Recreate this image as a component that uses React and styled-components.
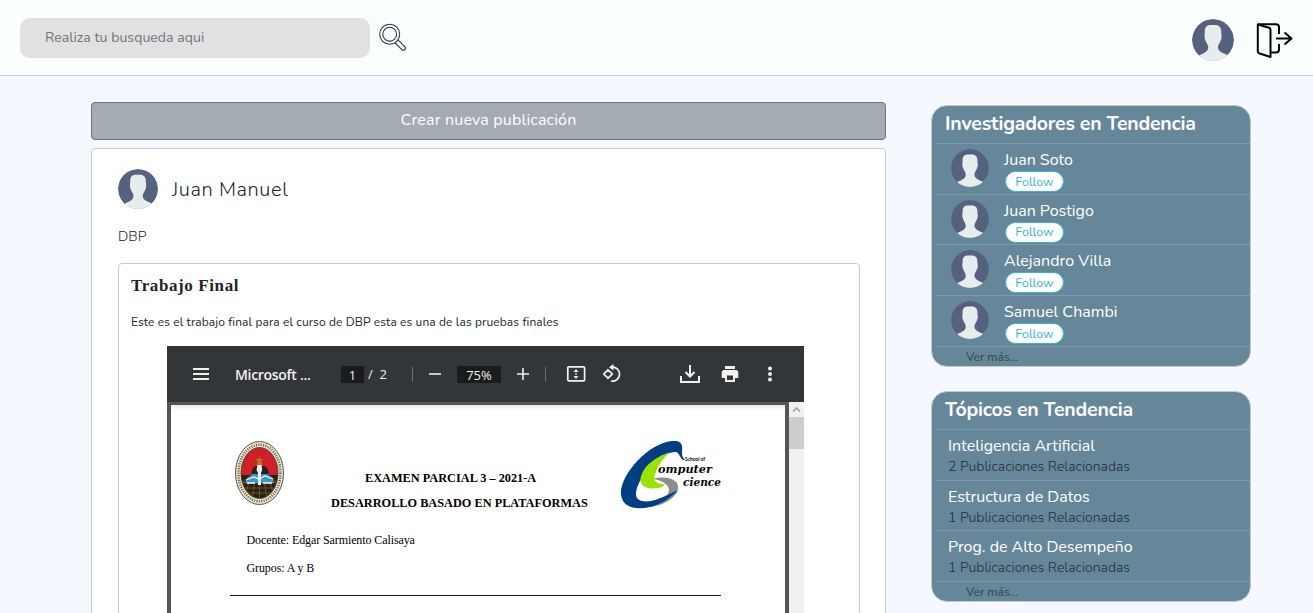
import React from 'react';
import styled, { createGlobalStyle } from 'styled-components';

const GlobalStyle = createGlobalStyle`
  * { box-sizing: border-box; }
  html, body { margin: 0; height: 613px; overflow: hidden; }
  body { background: #f5f9ff; font-family: Nunito, Lato, "Open Sans", sans-serif; color: #212529; }
  button, input { font-family: inherit; }
`;

const Header = styled.header`
  height: 76px;
  padding: 18px 20px 17px;
  display: flex;
  align-items: flex-start;
  background: #fbfeff;
  border-bottom: 1px solid #c9cdd0;
`;

const SearchInput = styled.input`
  width: 350px;
  height: 40px;
  padding: 0 25px 2px;
  border: 0;
  border-radius: 10px;
  background: #e1e1e1;
  font-size: 14px;
  letter-spacing: 0.08px;
  &::placeholder { color: #6c757d; opacity: 1; }
`;

const SearchIcon = styled.svg`
  width: 28px;
  height: 28px;
  margin: 5px 0 0 9px;
`;

const HeaderActions = styled.div`
  margin-left: auto;
  display: flex;
  gap: 22px;
`;

const ExitIcon = styled.svg`
  width: 37px;
  height: 36px;
  margin-top: 5px;
`;

const AvatarSvg = styled.svg`
  flex: none;
  width: ${(p) => p.$size}px;
  height: ${(p) => p.$size}px;
  margin-top: ${(p) => p.$top || 0}px;
  border-radius: 50%;
`;

const Layout = styled.div`
  display: flex;
  align-items: flex-start;
  padding-left: 91px;
`;

const Feed = styled.main`
  width: 795px;
  padding-top: 26px;
`;

const CreateButton = styled.button`
  display: block;
  width: 100%;
  height: 38px;
  padding: 0 0 2px;
  border: 1px solid #6c757d;
  border-radius: 4px;
  background: #a4abb3;
  color: #fff;
  font-size: 16px;
  letter-spacing: 0.2px;
`;

const Post = styled.article`
  height: 700px;
  margin-top: 8px;
  padding: 20px 25px 0 26px;
  border: 1px solid #c8cacc;
  border-radius: 4px;
  background: #fff;
`;

const Author = styled.div`
  display: flex;
  align-items: center;
  gap: 14px;
  height: 40px;
  font-size: 20px;
  font-weight: 300;
  letter-spacing: 0.6px;
`;

const Course = styled.div`
  margin-top: 18px;
  height: 20px;
  line-height: 20px;
  font-size: 14px;
  font-weight: 300;
`;

const Attachment = styled.section`
  height: 600px;
  margin-top: 16px;
  padding: 10px 0 0 12px;
  border: 1px solid #c8cacc;
  border-radius: 4px;
`;

const AttachmentTitle = styled.h2`
  margin: 0;
  height: 24px;
  line-height: 24px;
  font: bold 17px/24px "Liberation Serif", serif;
  letter-spacing: 0.6px;
`;

const Description = styled.p`
  margin: 14px 0;
  height: 20px;
  line-height: 20px;
  font-size: 12px;
  letter-spacing: 0.1px;
`;

const Viewer = styled.div`
  width: 637px;
  height: 500px;
  margin-left: 36px;
  background: #525659;
`;

const Toolbar = styled.div`
  height: 56px;
  display: flex;
  align-items: center;
  padding-left: 24px;
  background: #323639;
  color: #f1f1f1;
  font: 13px "Open Sans", sans-serif;
`;

const ToolIcon = styled.svg`
  flex: none;
  width: 20px;
  height: 20px;
  margin-left: ${(p) => p.$left || 0}px;
  fill: none;
  stroke: #f1f1f1;
  stroke-width: 2;
`;

const FileName = styled.div`
  width: 82px;
  margin-left: 24px;
  font-weight: 600;
  font-size: 14px;
  letter-spacing: -0.3px;
  white-space: nowrap;
  padding-top: 1px;
`;

const ToolField = styled.div`
  width: ${(p) => p.$width}px;
  height: 17px;
  margin-left: ${(p) => p.$left}px;
  background: #191b1c;
  line-height: 18px;
  text-align: center;
`;

const PageCount = styled.div`
  width: 24px;
  margin-left: 4px;
  white-space: pre;
  line-height: 18px;
`;

const Separator = styled.div`
  width: 1px;
  height: 15px;
  margin-left: ${(p) => p.$left}px;
  background: #6b6e70;
`;

const ViewerBody = styled.div`
  display: flex;
  height: 444px;
  padding-left: 4px;
`;

const Sheet = styled.div`
  width: 614px;
  margin: 3px 4px 0 0;
  background: linear-gradient(#ececec, #fff 6px);
  color: #000;
  font-family: "Liberation Serif", serif;
`;

const SheetHeader = styled.div`
  display: flex;
  height: 126px;
  padding: 36px 0 0 64px;
`;

const SealSvg = styled.svg`
  width: 49px;
  height: 64px;
`;

const LogoSvg = styled.svg`
  width: 104px;
  height: 68px;
`;

const SheetHeadings = styled.div`
  width: 336px;
  padding: 25px 0 0 47px;
`;

const SheetHeading = styled.div`
  height: 25px;
  line-height: 25px;
  padding-left: ${(p) => p.$indent || 0}px;
  font-weight: bold;
  font-size: 12.3px;
  letter-spacing: ${(p) => p.$spacing || 0}px;
  white-space: nowrap;
`;

const SheetLine = styled.div`
  height: 28px;
  line-height: 18px;
  padding-left: 75.5px;
  font-size: 12px;
  letter-spacing: -0.1px;
`;

const SheetRule = styled.div`
  width: 491px;
  height: 1px;
  margin: 8px 0 9px 59px;
  background: #111;
`;

const Scrollbar = styled.div`
  width: 15px;
  background: #f1f1f1;
`;

const ScrollArrow = styled.svg`
  display: block;
  width: 15px;
  height: 15px;
`;

const ScrollThumb = styled.div`
  height: 32px;
  background: #cdcdcd;
`;

const Sidebar = styled.aside`
  width: 320px;
  margin-left: 45px;
  padding-top: 29px;
`;

const Panel = styled.section`
  height: ${(p) => p.$height}px;
  margin-bottom: 24px;
  padding-left: 4px;
  border: 1px solid #c4cbd0;
  border-radius: 16px;
  background: #668799;
  overflow: hidden;
`;

const PanelTitle = styled.h2`
  margin: 0;
  height: 37px;
  padding-left: 9px;
  line-height: 36px;
  color: #fff;
  font-size: 19.5px;
  font-weight: 700;
  letter-spacing: ${(p) => p.$spacing}px;
`;

const Row = styled.div`
  display: flex;
  height: 50.7px;
  border-top: 1px solid #7f9aa9;
  padding-left: ${(p) => p.$left}px;
`;

const PersonInfo = styled.div`
  margin-left: 15px;
  padding-top: 6px;
`;

const Name = styled.div`
  height: 20px;
  line-height: 20px;
  color: #fff;
  font-size: 16px;
  letter-spacing: ${(p) => p.$spacing || 0}px;
`;

const Follow = styled.button`
  display: block;
  width: 59px;
  height: 21px;
  margin: 1px 0 0 1px;
  padding: 0 0 1px;
  border: 1px solid #31b6d8;
  border-radius: 11px;
  background: #fff;
  color: #31b6d8;
  font-size: 12.5px;
`;

const TopicInfo = styled.div`
  padding-top: 6px;
`;

const Related = styled.div`
  height: 21px;
  line-height: 21px;
  color: #212d35;
  font-size: 14px;
  font-weight: 300;
`;

const More = styled.div`
  height: 21px;
  padding-left: 30px;
  border-top: 1px solid #7f9aa9;
  line-height: 20px;
  color: #36434b;
  font-size: 12px;
`;

function Avatar({ size, top }) {
  return (
    <AvatarSvg $size={size} $top={top} viewBox="0 0 40 40">
      <circle cx="20" cy="20" r="20" fill="#56607f" />
      <path
        fill="#e7eded"
        d="M12.2 12.5C12 8 14 5.8 18 5.8h4c4.200 0 6 2.700 5.800 6.700 0 2 .8 3.400.2 6-.7 3.600-3.300 5.500-3.300 8.500 0 3.800 4.500 5.500 9.300 7.500L35 42H5l2-7.500c4.500-1.900 8.500-3.600 8.500-7.500 0-3-2.600-4.800-3.300-8.500-.6-2.600 0-4 0-6z"
      />
    </AvatarSvg>
  );
}

function Seal() {
  return (
    <SealSvg viewBox="0 0 49 64">
      <defs>
        <clipPath id="sealInside"><ellipse cx="24.500" cy="32" rx="18.500" ry="25.500" /></clipPath>
      </defs>
      <ellipse cx="24.500" cy="32" rx="24" ry="31.500" fill="#ece7cf" stroke="#55534a" />
      <ellipse cx="24.500" cy="32" rx="21" ry="28.300" fill="none" stroke="#69665a" strokeWidth="2.600" strokeDasharray="1.100 1.300" />
      <g clipPath="url(#sealInside)">
        <path fill="#d02027" d="M0 0h49v36H0z" />
        <path fill="#2c210f" d="M0 34h49v30H0z" />
        <path stroke="#8a7440" strokeWidth=".6" fill="none" d="M0 42h49M0 47h49M0 52h49M24.500 38v22M20 38l-3 22M29 38l3 22M15 38l-6 20M34 38l6 20M10 38L3 52M39 38l7 14" />
        <path fill="#2a2020" d="M17 35c-1-7 1-10 6-10h4c6 0 7 4 6 10z" />
        <path fill="#3a98cd" d="M12 37l6-4h14l6 4 1 5H10z" />
        <path stroke="#f3f8fb" strokeWidth="1.300" fill="none" d="M11 39l8-3 5 2 6-3 8 3M12 42h8M28 42h9" />
        <path fill="#f2efe9" d="M22.500 24h4l.7 5-1.200 3v12h-3V32l-1.500-3z" />
        <path fill="#b9712b" d="M24.500 15l1 3h3l-2 2 .8 4h-5.600l.8-4-2-2h3z" />
      </g>
      <ellipse cx="24.500" cy="32" rx="18.500" ry="25.500" fill="none" stroke="#3c352a" strokeWidth=".8" />
    </SealSvg>
  );
}

function SchoolLogo() {
  return (
    <LogoSvg viewBox="0 0 104 68">
      <path fill="#8b8d8f" d="M32 38c8-3 25-2 26 7 1 9-10 18-26 21l-10 0 2-4c10 0 20-3 24-9 4-8-5-14-16-15z" />
      <path fill="#023e84" d="M63 19c-3-2-3.500-7-7-8C43 10 18 34 16 52c-1 10 12 10 22 6 8-3 14-6 20-9-7 8-17 14-28 17-14 3-27 1-29-12C-1 35 28 2 52 0c9-1 11 4 10 10-.5 5 1 7 3 9z" />
      <path fill="#9be205" d="M50 11C39 15 25 22 21 35c-3 9 5 14 15 12 5 0 8-2 9-4-8 0-13-3-10-9 2-8 7-16 15-23z" />
      <g fill="#050505">
        <text x="65" y="20" fontFamily="Lato" fontWeight="700" fontSize="5" textLength="20">School of</text>
        <text x="38" y="32" fontFamily="DejaVu Serif" fontStyle="italic" fontWeight="700" fontSize="11.500" textLength="54" lengthAdjust="spacingAndGlyphs">omputer</text>
        <text x="63" y="45" fontFamily="DejaVu Serif" fontStyle="italic" fontWeight="700" fontSize="11.500" textLength="38" lengthAdjust="spacingAndGlyphs">cience</text>
      </g>
    </LogoSvg>
  );
}

function ViewerToolbar() {
  return (
    <Toolbar>
      <ToolIcon viewBox="0 0 20 20"><path d="M2 5h16M2 10h16M2 15h16" /></ToolIcon>
      <FileName>Microsoft ...</FileName>
      <ToolField $width={23} $left={24}>1</ToolField>
      <PageCount>/  2</PageCount>
      <Separator $left={20} />
      <ToolIcon $left={12} viewBox="0 0 20 20"><path stroke="#c8c9ca" d="M4 10h12" /></ToolIcon>
      <ToolField $width={44} $left={12}>75%</ToolField>
      <ToolIcon $left={12} viewBox="0 0 20 20"><path strokeWidth="1.600" d="M4 10h12M10 4v12" /></ToolIcon>
      <Separator $left={12} />
      <ToolIcon $left={20} viewBox="0 0 20 20">
        <rect x="1.800" y="2.800" width="16.800" height="14" rx="1" strokeWidth="1.700" />
        <path stroke="none" fill="#f1f1f1" d="M10 5l2.500 3h-5zM10 15l2.500-3h-5zM9.300 9.300h1.500v1.500H9.300z" />
      </ToolIcon>
      <ToolIcon $left={16} viewBox="0 0 20 20">
        <path strokeWidth="1.700" d="M6 5.800L10.300 10 6 14.200 1.800 10zM10 3.200a7 7 0 1 1-1 13.800" />
        <path stroke="none" fill="#f1f1f1" d="M7 3.300L11.500 0v6.500z" />
      </ToolIcon>
      <ToolIcon $left={58} viewBox="0 0 20 20">
        <path strokeWidth="2" d="M1 12v6h18v-6M10 1v11" /><path d="M5.500 8l4.500 4.500L14.500 8" />
      </ToolIcon>
      <ToolIcon $left={20} viewBox="0 0 20 20">
        <path stroke="none" fill="#f1f1f1" fillRule="evenodd" d="M5 2h10v3H5zM4.500 6h11A2.500 2.500 0 0 1 18.300 8.500V14H15v4H5v-4H1.700V8.500A2.500 2.500 0 0 1 4.500 6zM7 11.500V16h6v-4.500z" />
      </ToolIcon>
      <ToolIcon $left={20} viewBox="0 0 20 20">
        <g stroke="none" fill="#f1f1f1"><circle cx="10" cy="4.500" r="2" /><circle cx="10" cy="10" r="2" /><circle cx="10" cy="15.500" r="2" /></g>
      </ToolIcon>
    </Toolbar>
  );
}

const people = [
  { name: 'Juan Soto', spacing: 0 },
  { name: 'Juan Postigo', spacing: 0 },
  { name: 'Alejandro Villa', spacing: 0 },
  { name: 'Samuel Chambi', spacing: 0 },
];

const topics = [
  { name: 'Inteligencia Artificial', count: 2 },
  { name: 'Estructura de Datos', count: 1 },
  { name: 'Prog. de Alto Desempeño', count: 1 },
];

export default function App() {
  return (
    <>
      <GlobalStyle />
      <Header>
        <SearchInput placeholder="Realiza tu busqueda aqui" />
        <SearchIcon viewBox="0 0 28 28" fill="none" stroke="#30363a" strokeWidth="1.100">
          <circle cx="10.700" cy="11.200" r="10" />
          <circle cx="10.700" cy="11.200" r="6.900" />
          <path d="M15.700 19.500l7.300 7.300c2 1.500 4.500-.8 3-2.900l-7.300-7.200" />
        </SearchIcon>
        <HeaderActions>
          <Avatar size={42} top={1} />
          <ExitIcon viewBox="0 0 37 36" fill="none" stroke="#050505" strokeWidth="2" strokeLinejoin="round">
            <path d="M1.800 1.500l11.200 3.300c1 .3 1.500 1 1.500 2V34L3 30.200c-.8-.3-1.200-.8-1.200-1.600z" />
            <path d="M1.800 1.300H20c2 0 3 1 3 3V11M23 21v5.500c0 2-1 3-3 3h-5.500M20 15.500h15.500M28.500 9.500l7 6-7 6" />
          </ExitIcon>
        </HeaderActions>
      </Header>
      <Layout>
        <Feed>
          <CreateButton>Crear nueva publicación</CreateButton>
          <Post>
            <Author><Avatar size={40} /><span>Juan Manuel</span></Author>
            <Course>DBP</Course>
            <Attachment>
              <AttachmentTitle>Trabajo Final</AttachmentTitle>
              <Description>Este es el trabajo final para el curso de DBP esta es una de las pruebas finales</Description>
              <Viewer>
                <ViewerToolbar />
                <ViewerBody>
                  <Sheet>
                    <SheetHeader>
                      <Seal />
                      <SheetHeadings>
                        <SheetHeading $indent={34}>EXAMEN PARCIAL 3 – 2021-A</SheetHeading>
                        <SheetHeading>DESARROLLO BASADO EN PLATAFORMAS</SheetHeading>
                      </SheetHeadings>
                      <SchoolLogo />
                    </SheetHeader>
                    <SheetLine>Docente: Edgar Sarmiento Calisaya</SheetLine>
                    <SheetLine>Grupos: A y B</SheetLine>
                    <SheetRule />
                    <SheetHeading $indent={255}>PROYECTO FINAL</SheetHeading>
                  </Sheet>
                  <Scrollbar>
                    <ScrollArrow viewBox="0 0 15 15" fill="none" stroke="#a3a3a3" strokeWidth="1.700"><path d="M4 9.500L7.500 6 11 9.500" /></ScrollArrow>
                    <ScrollThumb />
                  </Scrollbar>
                </ViewerBody>
              </Viewer>
            </Attachment>
          </Post>
        </Feed>
        <Sidebar>
          <Panel $height={262}>
            <PanelTitle $spacing={-0.2}>Investigadores en Tendencia</PanelTitle>
            {people.map((p) => (
              <Row key={p.name} $left={15}>
                <Avatar size={38} top={5} />
                <PersonInfo>
                  <Name $spacing={p.spacing}>{p.name}</Name>
                  <Follow>Follow</Follow>
                </PersonInfo>
              </Row>
            ))}
            <More>Ver más...</More>
          </Panel>
          <Panel $height={211}>
            <PanelTitle $spacing={-0.2}>Tópicos en Tendencia</PanelTitle>
            {topics.map((t) => (
              <Row key={t.name} $left={12}>
                <TopicInfo>
                  <Name>{t.name}</Name>
                  <Related>{t.count} Publicaciones Relacionadas</Related>
                </TopicInfo>
              </Row>
            ))}
            <More>Ver más...</More>
          </Panel>
        </Sidebar>
      </Layout>
    </>
  );
}
